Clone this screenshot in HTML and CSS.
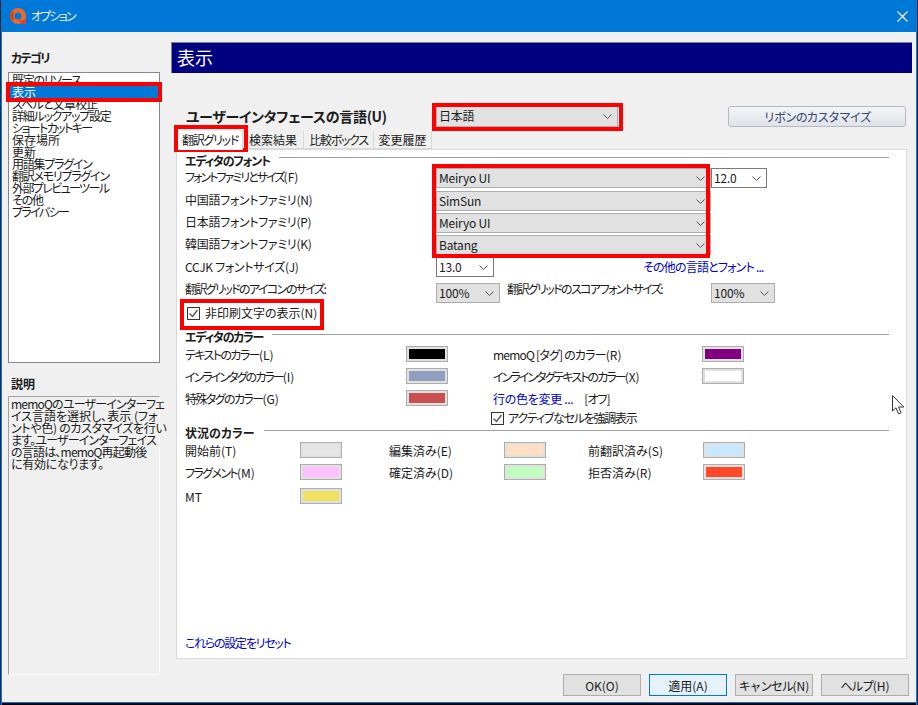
FILE: index.html
```html
<!DOCTYPE html>
<html lang="ja">
<head>
<meta charset="utf-8">
<title>オプション</title>
<link rel="stylesheet" href="styles.css">
</head>
<body>
<div class="window">
  <header class="titlebar">
    <svg class="logo" width="18" height="18" viewBox="0 0 18 18"><circle cx="9" cy="9" r="5.8" fill="none" stroke="#ea6a2e" stroke-width="4.6"/><path d="M4 5A7 7 0 0 0 4 13" fill="none" stroke="#c9452a" stroke-width="3"/><path d="M10 13L17 13L17 17L13 17Z" fill="#e0452c"/></svg>
    <span class="title">オプション</span>
    <svg class="close" width="11" height="11" viewBox="0 0 11 11"><path d="M.5.5L10.5 10.5M10.5.5L.5 10.5" stroke="#fff" stroke-width="1.1" fill="none"/></svg>
  </header>
  <div class="content">
    <aside class="sidebar">
      <h2 class="side-heading ls4">カテゴリ</h2>
      <ul class="category-list">
        <li class="ls3">既定のリソース</li>
        <li class="selected">表示</li>
        <li class="ls2">スペルと文章校正</li>
        <li class="ls3">詳細ルックアップ設定</li>
        <li class="ls4">ショートカットキー</li>
        <li>保存場所</li>
        <li>更新</li>
        <li class="ls3">用語集プラグイン</li>
        <li class="ls3">翻訳メモリプラグイン</li>
        <li class="ls4">外部プレビューツール</li>
        <li class="ls3">その他</li>
        <li class="ls4">プライバシー</li>
      </ul>
      <h2 class="side-heading desc-heading">説明</h2>
      <div class="description">
        <p class="ls2">memoQのユーザーインターフェ</p>
        <p>イス言語を選択し、表示 (フォ</p>
        <p class="ls1">ントや色) のカスタマイズを行い</p>
        <p class="ls2">ます。ユーザーインターフェイス</p>
        <p class="ls2">の言語は、memoQ再起動後</p>
        <p class="ls1">に有効になります。</p>
      </div>
    </aside>
    <main class="main">
      <div class="banner">表示</div>
      <div class="lang-row">
        <label class="lang-label">ユーザーインタフェースの言語(U)</label>
        <div class="select gray w-lang">日本語<svg class="chev" width="9" height="5" viewBox="0 0 9 5"><path d="M.5.5L4.5 4.5L8.5.5" fill="none" stroke="#555"/></svg></div>
        <button class="ribbon ls3">リボンのカスタマイズ</button>
      </div>
      <nav class="tabs">
        <span class="tab active ls3">翻訳グリッド</span>
        <span class="tab tab-search">検索結果</span>
        <span class="tab tab-compare ls3">比較ボックス</span>
        <span class="tab tab-history">変更履歴</span>
      </nav>
      <section class="panel">
        <div class="group-head first"><span class="ls3">エディタのフォント</span><i></i></div>
        <div class="font-grid">
          <span class="ls5">フォントファミリとサイズ<small class="key">(F)</small></span>
          <div class="select gray">Meiryo UI<svg class="chev" width="9" height="5" viewBox="0 0 9 5"><path d="M.5.5L4.5 4.5L8.5.5" fill="none" stroke="#555"/></svg></div>
          <div class="select white w-size">12.0<svg class="chev" width="9" height="5" viewBox="0 0 9 5"><path d="M.5.5L4.5 4.5L8.5.5" fill="none" stroke="#555"/></svg></div>

          <span class="ls1">中国語フォントファミリ(N)</span>
          <div class="select gray">SimSun<svg class="chev" width="9" height="5" viewBox="0 0 9 5"><path d="M.5.5L4.5 4.5L8.5.5" fill="none" stroke="#555"/></svg></div>
          <span></span>

          <span class="ls1">日本語フォントファミリ(P)</span>
          <div class="select gray">Meiryo UI<svg class="chev" width="9" height="5" viewBox="0 0 9 5"><path d="M.5.5L4.5 4.5L8.5.5" fill="none" stroke="#555"/></svg></div>
          <span></span>

          <span class="ls1">韓国語フォントファミリ(K)</span>
          <div class="select gray">Batang<svg class="chev" width="9" height="5" viewBox="0 0 9 5"><path d="M.5.5L4.5 4.5L8.5.5" fill="none" stroke="#555"/></svg></div>
          <span></span>

          <span class="ls1 lower">CCJK フォントサイズ(J)</span>
          <div class="cell-split">
            <div class="select white w-ccjk">13.0<svg class="chev" width="9" height="5" viewBox="0 0 9 5"><path d="M.5.5L4.5 4.5L8.5.5" fill="none" stroke="#555"/></svg></div>
          </div>
          <span></span>

          <span class="ls4 upper">翻訳グリッドのアイコンのサイズ:</span>
          <div class="cell-split">
            <div class="select gray w-pct">100%<svg class="chev" width="9" height="5" viewBox="0 0 9 5"><path d="M.5.5L4.5 4.5L8.5.5" fill="none" stroke="#555"/></svg></div>
            <span class="score-label ls4">翻訳グリッドのスコアフォントサイズ:</span>
          </div>
          <div class="select gray w-pct">100%<svg class="chev" width="9" height="5" viewBox="0 0 9 5"><path d="M.5.5L4.5 4.5L8.5.5" fill="none" stroke="#555"/></svg></div>
        </div>
        <label class="check-row"><span class="check"><svg width="11" height="11" viewBox="0 0 11 11"><path d="M1.5 5.5L4.5 8.5L9.5 2" fill="none" stroke="#555" stroke-width="1.4"/></svg></span>非印刷文字の表示(N)</label>

        <div class="group-head"><span class="ls3">エディタのカラー</span><i></i></div>
        <div class="color-grid">
          <span class="ls4">テキストのカラー<small class="key">(L)</small></span><b class="swatch"><i class="c-black"></i></b>
          <span class="ls2">memoQ [タグ] のカラー<small class="key">(R)</small></span><b class="swatch"><i class="c-purple"></i></b>
          <span class="ls5">インラインタグのカラー<small class="key">(I)</small></span><b class="swatch"><i class="c-tag"></i></b>
          <span class="ls5">インラインタグテキストのカラー<small class="key">(X)</small></span><b class="swatch"><i class="c-white"></i></b>
          <span class="ls4">特殊タグのカラー<small class="key">(G)</small></span><b class="swatch"><i class="c-red"></i></b>
          <span class="row-color"><a class="link ls1">行の色を変更 ...</a><em>[オフ]</em></span>
          <label class="active-check ls3"><span class="check"><svg width="11" height="11" viewBox="0 0 11 11"><path d="M1.5 5.5L4.5 8.5L9.5 2" fill="none" stroke="#555" stroke-width="1.4"/></svg></span>アクティブなセルを強調表示</label>
        </div>

        <div class="group-head"><span>状況のカラー</span><i></i></div>
        <div class="status-grid">
          <span>開始前(T)</span><b class="swatch"><i class="c-none"></i></b>
          <span>編集済み(E)</span><b class="swatch"><i class="c-peach"></i></b>
          <span>前翻訳済み(S)</span><b class="swatch"><i class="c-sky"></i></b>
          <span class="ls4">フラグメント<small class="key">(M)</small></span><b class="swatch"><i class="c-pink"></i></b>
          <span>確定済み(D)</span><b class="swatch"><i class="c-green"></i></b>
          <span>拒否済み(R)</span><b class="swatch"><i class="c-orange"></i></b>
          <span>MT</span><b class="swatch"><i class="c-yellow"></i></b>
        </div>
        <a class="link reset ls3">これらの設定をリセット</a>
        <a class="link more ls2">その他の言語とフォント ...</a>
      </section>
      <footer class="actions">
        <button class="btn">OK(O)</button>
        <button class="btn default">適用(A)</button>
        <button class="btn ls3">キャンセル<small class="key">(N)</small></button>
        <button class="btn wide ls3">ヘルプ<small class="key">(H)</small></button>
      </footer>
    </main>
  </div>
  <div class="mark m-item"></div>
  <div class="mark m-tab"></div>
  <div class="mark m-lang"></div>
  <div class="mark m-fonts"></div>
  <div class="mark m-check"></div>
  <svg class="cursor" width="14" height="20" viewBox="0 0 14 20"><path d="M.5.5V16L4 12.8L6.5 18.8L9 17.8L6.6 12H11.8Z" fill="#fff" stroke="#333" stroke-width="1"/></svg>
</div>
</body>
</html>
```
FILE: styles.css
```css
* { box-sizing: border-box; }
html, body { margin: 0; padding: 0; }
body {
  font-family: "Noto Sans CJK JP", "Noto Sans", sans-serif;
  font-size: 12px;
  line-height: 14px;
  color: #1a1a1a;
  font-feature-settings: "palt";
}
.ls1 { letter-spacing: -.3px; }
.ls2 { letter-spacing: -.8px; }
.ls3 { letter-spacing: -1.25px; }
.ls4 { letter-spacing: -1.6px; }
.ls5 { letter-spacing: -1.95px; }
.key { font-size: inherit; letter-spacing: 0; }
.window {
  position: relative;
  width: 918px;
  height: 705px;
  overflow: hidden;
  background: #f0f0f0;
  box-shadow: inset 1px 0 0 #1c2a38, inset -1px 0 0 #1c2a38, inset 2px 0 0 #0078d7, inset -2px 0 0 #0078d7, inset 0 -2px 0 #000, inset 0 -3px 0 #0078d7;
}
.titlebar {
  display: flex;
  align-items: center;
  height: 32px;
  margin: 0 1px;
  padding-left: 8px;
  background: #0078d7;
  color: #e6f1fa;
}
.logo { flex: none; }
.title { margin-left: 4px; font-size: 12px; letter-spacing: -1.8px; }
.close { margin-left: auto; margin-right: 9px; }
.content { display: flex; }
.sidebar { width: 152px; margin-left: 8px; flex: none; }
.side-heading { margin: 19px 0 7px 3px; font-size: 12px; line-height: 14px; font-weight: 700; }
.desc-heading { margin: 14px 0 5px 3px; }
.category-list {
  list-style: none;
  margin: 0;
  padding: 1px 0 0;
  height: 291px;
  background: #fff;
  border: 1px solid #828790;
  overflow: hidden;
}
.category-list li { height: 12px; line-height: 12px; padding-left: 3px; white-space: nowrap; }
.category-list .selected { background: #0078d7; color: #fff; }
.description {
  height: 279px;
  padding: 1px 2px;
  border: 1px solid;
  border-color: #a0a0a0 #fff #fff #a0a0a0;
  line-height: 12px;
  white-space: nowrap;
}
.description p { margin: 0; }
.main { width: 741px; margin-left: 11px; flex: none; padding-top: 10px; }
.banner {
  height: 31px;
  padding-left: 5px;
  background: #000080;
  border-top: 1px solid #808080;
  border-left: 1px solid #808080;
  color: #fff;
  font-size: 18px;
  line-height: 29px;
}
.lang-row { display: flex; align-items: center; height: 22px; margin: 32px 6px 0 15px; }
.lang-label { width: 250px; flex: none; font-size: 14px; font-weight: 700; letter-spacing: -.3px; white-space: nowrap; }
.select {
  display: flex;
  align-items: center;
  height: 20px;
  padding: 0 5px 0 2px;
  border: 1px solid #adadad;
  letter-spacing: -.2px;
  white-space: nowrap;
}
.select.gray { background: #e1e1e1; }
.select.white { background: #fff; border-color: #7a7a7a; }
.chev { margin-left: auto; flex: none; }
.w-lang { width: 182px; height: 21px; }
.ribbon {
  width: 178px;
  height: 21px;
  margin-left: 110px;
  padding: 0;
  font-family: inherit;
  font-size: 12px;
  color: #34466e;
  border: 1px solid #b4b8c0;
  border-radius: 3px;
  background: linear-gradient(#f4f5f7, #dfe2e8);
}
.tabs { display: flex; height: 18px; margin: 4px 0 0 7px; position: relative; }
.tab {
  height: 18px;
  line-height: 18px;
  text-align: center;
  border-right: 1px solid #d9d9d9;
  border-bottom: 1px solid #d9d9d9;
}
.tab.active { width: 65px; background: #fff; border-bottom: 0; height: 19px; position: relative; z-index: 1; }
.tab-search { width: 61px; }
.tab-compare { width: 70px; }
.tab-history { width: 58px; }
.panel {
  position: relative;
  display: flex;
  flex-direction: column;
  width: 731px;
  height: 510px;
  margin-left: 5px;
  padding: 4px 0 8px 8px;
  background: #fff;
  border: 1px solid #d9d9d9;
}
.group-head { display: flex; width: 704px; height: 14px; font-weight: 700; white-space: nowrap; }
.group-head i { flex: 1; height: 1px; margin: 4px 0 0 9px; background: #a0a0a0; }
.group-head.first i { margin-top: 3px; }
.font-grid {
  display: grid;
  grid-template-columns: 251px 275px 70px;
  grid-template-rows: 23px 22px 22px 22px 26px 20px;
  white-space: nowrap;
}
.font-grid > span { line-height: 17px; }
.font-grid > .lower { line-height: 20px; }
.font-grid > .upper { line-height: 12px; }
.cell-split { display: flex; }
.w-size { width: 56px; }
.w-ccjk { width: 58px; }
.w-pct { width: 64px; }
.score-label { margin-left: 7px; line-height: 12px; }
.check-row { display: flex; align-items: center; height: 14px; margin: 3px 0 10px 2px; white-space: nowrap; }
.check {
  display: flex;
  align-items: center;
  justify-content: center;
  width: 13px;
  height: 13px;
  flex: none;
  margin-right: 5px;
  background: #fff;
  border: 1px solid #333;
}
.color-grid {
  display: grid;
  grid-template-columns: 221px 87px 209px 42px;
  grid-template-rows: 22px 22px 21px 15px;
  margin-top: 2px;
  white-space: nowrap;
}
.status-grid {
  display: grid;
  grid-template-columns: 115px 89px 115px 84px 115px 42px;
  grid-template-rows: 22px 24px 22px;
  margin-top: 2px;
  white-space: nowrap;
}
.color-grid > span, .status-grid > span { line-height: 18px; }
.swatch { display: block; width: 42px; height: 16px; padding: 2px; background: #e1e1e1; border: 1px solid #adadad; }
.swatch i { display: block; height: 10px; }
.c-black { background: #000; }
.c-purple { background: #800080; }
.c-tag { background: #939dc0; }
.c-white { background: #fff; }
.c-red { background: #c85050; }
.c-none { background: #e6e6e6; }
.c-peach { background: #ffdfc4; }
.c-sky { background: #c8e8ff; }
.c-pink { background: #ffc0ff; }
.c-green { background: #c0ffc0; }
.c-orange { background: #ff4828; }
.c-yellow { background: #f0e060; }
.color-grid > .row-color { grid-column: 3 / 5; display: flex; }
.row-color em { font-style: normal; margin-left: 11px; letter-spacing: -1px; }
.active-check { grid-column: 3 / 5; display: flex; align-items: center; margin-left: -2px; height: 14px; }
.active-check .check { margin-right: 4px; }
.link { color: #0000cd; white-space: nowrap; }
.reset { margin-top: auto; }
.more { position: absolute; left: 466px; top: 110px; }
.actions { display: flex; gap: 8px; justify-content: flex-end; margin: 15px 3px 0 0; }
.btn {
  width: 78px;
  height: 22px;
  padding: 0;
  font-family: inherit;
  font-size: 12px;
  color: #1a1a1a;
  background: #e1e1e1;
  border: 1px solid #adadad;
}
.btn.default { background: #e5f1fb; border-color: #0078d7; }
.btn.wide { width: 88px; }
.mark { position: absolute; border: 4px solid #f00; }
.m-item { left: 6px; top: 82px; width: 156px; height: 20px; }
.m-tab { left: 174px; top: 125px; width: 74px; height: 27px; }
.m-lang { left: 432px; top: 103px; width: 191px; height: 28px; }
.m-fonts { left: 432px; top: 164px; width: 278px; height: 94px; }
.m-check { left: 180px; top: 299px; width: 144px; height: 31px; }
.cursor { position: absolute; left: 892px; top: 395px; }
```
